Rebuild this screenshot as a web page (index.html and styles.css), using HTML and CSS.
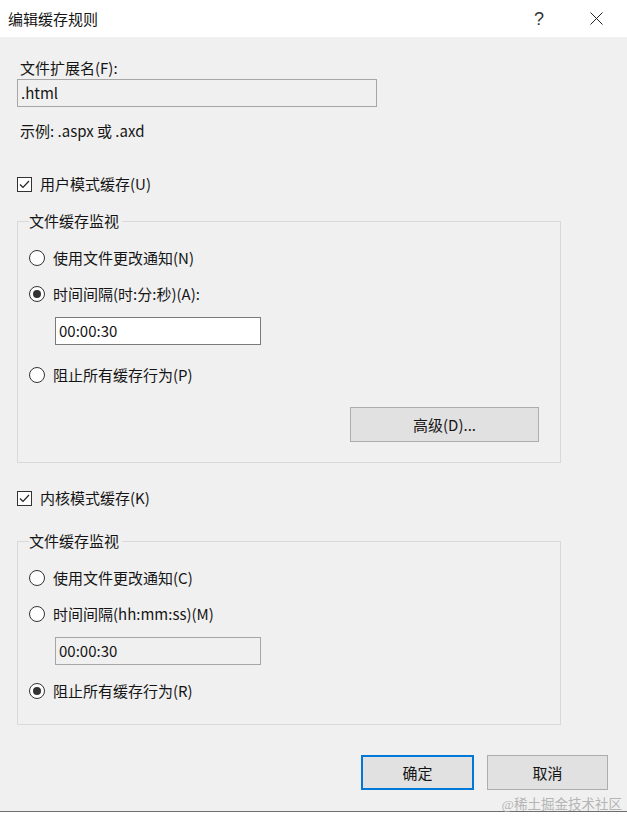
FILE: index.html
```html
<!DOCTYPE html>
<html lang="zh-CN">
<head>
<meta charset="utf-8">
<title>编辑缓存规则</title>
<link rel="stylesheet" href="styles.css">
</head>
<body>
<div class="window">
  <div class="titlebar">
    <span class="title">编辑缓存规则</span>
    <span class="help">?</span>
    <svg class="close" width="13" height="13" viewBox="0 0 13 13"><path d="M0.5 0.5 L12.5 12.5 M12.5 0.5 L0.5 12.5" stroke="#222" stroke-width="1" fill="none"/></svg>
  </div>
  <div class="client">
    <div class="content">
      <div class="label">文件扩展名(F):</div>
      <div class="field readonly">.html</div>
      <div class="example">示例: .aspx 或 .axd</div>

      <div class="check-row first-check">
        <span class="checkbox"><svg width="13" height="13" viewBox="0 0 13 13"><path d="M2 6.5 L5 9.5 L11 3" stroke="#222" stroke-width="1.2" fill="none"/></svg></span>
        <span>用户模式缓存(U)</span>
      </div>

      <fieldset class="group group-user">
        <legend>文件缓存监视</legend>
        <div class="radio-row r-first"><span class="radio"></span><span>使用文件更改通知(N)</span></div>
        <div class="radio-row r-next"><span class="radio checked"></span><span>时间间隔(时:分:秒)(A):</span></div>
        <div class="field time">00:00:30</div>
        <div class="radio-row r-after-user"><span class="radio"></span><span>阻止所有缓存行为(P)</span></div>
        <div class="adv-row"><button class="btn adv">高级(D)...</button></div>
      </fieldset>

      <div class="check-row second-check">
        <span class="checkbox"><svg width="13" height="13" viewBox="0 0 13 13"><path d="M2 6.5 L5 9.5 L11 3" stroke="#222" stroke-width="1.2" fill="none"/></svg></span>
        <span>内核模式缓存(K)</span>
      </div>

      <fieldset class="group group-kernel">
        <legend>文件缓存监视</legend>
        <div class="radio-row r-first"><span class="radio"></span><span>使用文件更改通知(C)</span></div>
        <div class="radio-row r-next"><span class="radio"></span><span>时间间隔(hh:mm:ss)(M)</span></div>
        <div class="field time disabled">00:00:30</div>
        <div class="radio-row r-next"><span class="radio checked"></span><span>阻止所有缓存行为(R)</span></div>
      </fieldset>
    </div>
    <div class="buttons">
      <button class="btn ok">确定</button>
      <button class="btn cancel">取消</button>
    </div>
  </div>
  <div class="watermark">@稀土掘金技术社区</div>
</div>
</body>
</html>
```

FILE: styles.css
```css
* { box-sizing: border-box; }

body {
  margin: 0;
  background: #ffffff;
  font-family: "Microsoft YaHei UI", "Noto Sans CJK SC", sans-serif;
  font-size: 15px;
  color: #151515;
}

.window {
  position: relative;
  width: 627px;
  height: 816px;
  overflow: hidden;
}

.titlebar {
  height: 37px;
  display: flex;
  align-items: center;
  padding-left: 8px;
  padding-right: 24px;
  background: #ffffff;
}

.title {
  flex: 1;
  line-height: 20px;
}

.help {
  width: 16px;
  text-align: center;
  margin-right: 43px;
  font-family: "Liberation Sans", sans-serif;
  font-size: 18px;
  color: #333;
  line-height: 20px;
}

.close {
  display: block;
}

.client {
  height: 775px;
  background: #f0f0f0;
  border-bottom: 1px solid #6e6e6e;
}

.content {
  padding: 21px 0 0 17px;
}

.label {
  line-height: 20px;
  padding-left: 3px;
}

.field {
  height: 28px;
  line-height: 26px;
  border: 1px solid #a6a6a6;
  padding-left: 3px;
}

.field.readonly {
  margin-top: 1px;
  width: 360px;
  background: #f0f0f0;
}

.example {
  margin-top: 14px;
  line-height: 20px;
  padding-left: 3px;
}

.check-row {
  display: flex;
  align-items: center;
  gap: 8px;
  height: 20px;
  line-height: 20px;
}

.first-check { margin-top: 33px; }
.second-check { margin-top: 25px; }

.checkbox {
  width: 15px;
  height: 15px;
  border: 1px solid #333;
  background: #ffffff;
  display: flex;
  align-items: center;
  justify-content: center;
}

.group {
  width: 544px;
  margin: 0;
  border: 1px solid #d9d9d9;
  padding: 0 0 20px 11px;
}

.group-user { margin-top: 17px; }
.group-kernel { margin-top: 23px; padding-bottom: 23px; }

.group legend {
  padding: 0 3px 0 0;
  line-height: 20px;
}

.radio-row {
  display: flex;
  align-items: center;
  gap: 8px;
  height: 20px;
  line-height: 20px;
}

.r-first { margin-top: 17px; }
.r-next { margin-top: 16px; }
.r-after-user { margin-top: 20px; }

.radio {
  width: 16px;
  height: 16px;
  border: 1px solid #333;
  border-radius: 50%;
  background: #ffffff;
  display: flex;
  align-items: center;
  justify-content: center;
}

.radio.checked::after {
  content: "";
  width: 8px;
  height: 8px;
  border-radius: 50%;
  background: #333;
}

.field.time {
  margin: 13px 0 0 26px;
  width: 206px;
  background: #ffffff;
  border-color: #7a7a7a;
}

.field.time.disabled {
  background: #f0f0f0;
  border-color: #a6a6a6;
}

.adv-row {
  display: flex;
  justify-content: flex-end;
  padding-right: 21px;
  margin-top: 22px;
}

.btn {
  font-family: inherit;
  font-size: 15px;
  color: #151515;
  background: #e1e1e1;
  border: 1px solid #adadad;
  padding: 0;
  margin: 0;
}

.adv {
  width: 189px;
  height: 35px;
}

.buttons {
  display: flex;
  justify-content: flex-end;
  gap: 13px;
  padding-right: 19px;
  margin-top: 30px;
}

.ok {
  width: 113px;
  height: 35px;
  border: 2px solid #0078d7;
}

.cancel {
  width: 121px;
  height: 35px;
}

.watermark {
  position: absolute;
  right: 5px;
  bottom: 3px;
  font-family: "Liberation Serif", "Noto Sans CJK SC", serif;
  font-size: 13.5px;
  line-height: 16px;
  color: #b5b5b5;
}
```
